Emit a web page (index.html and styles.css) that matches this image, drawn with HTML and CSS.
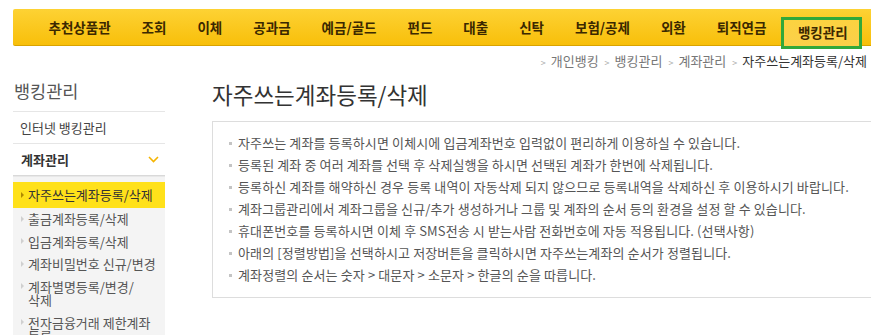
FILE: index.html
```html
<!DOCTYPE html>
<html>
<head>
    <title>자주쓰는계좌등록/삭제</title>
    <link rel="stylesheet" href="styles.css">
</head>
<body>
    <div class="gnb">
        <ul>
            <li>추천상품관</li>
            <li>조회</li>
            <li>이체</li>
            <li>공과금</li>
            <li>예금/골드</li>
            <li>펀드</li>
            <li>대출</li>
            <li>신탁</li>
            <li>보험/공제</li>
            <li>외환</li>
            <li>퇴직연금</li>
            <li class="on">뱅킹관리</li>
        </ul>
    </div>

    <div class="location">
        <span class="arr">&gt;</span><span>개인뱅킹</span><span class="arr">&gt;</span><span>뱅킹관리</span><span class="arr">&gt;</span><span>계좌관리</span><span class="arr">&gt;</span><strong>자주쓰는계좌등록/삭제</strong>
    </div>

    <div class="container">
        <div class="lnb">
            <h2>뱅킹관리</h2>
            <div class="depth1">인터넷 뱅킹관리</div>
            <div class="depth1 open">
                계좌관리
                <svg class="chev" width="11" height="7" viewBox="0 0 11 7"><path d="M1 1 L5.5 5.5 L10 1" fill="none" stroke="#f5b400" stroke-width="1.6"/></svg>
            </div>
            <ul class="depth2">
                <li class="on">자주쓰는계좌등록/삭제</li>
                <li>출금계좌등록/삭제</li>
                <li>입금계좌등록/삭제</li>
                <li>계좌비밀번호 신규/변경</li>
                <li>계좌별명등록/변경/<br>삭제</li>
                <li>전자금융거래 제한계좌<br>등록</li>
            </ul>
        </div>

        <div class="content">
            <h1>자주쓰는계좌등록/삭제</h1>
            <div class="infobox">
                <ul>
                    <li>자주쓰는 계좌를 등록하시면 이체시에 입금계좌번호 입력없이 편리하게 이용하실 수 있습니다.</li>
                    <li>등록된 계좌 중 여러 계좌를 선택 후 삭제실행을 하시면 선택된 계좌가 한번에 삭제됩니다.</li>
                    <li>등록하신 계좌를 해약하신 경우 등록 내역이 자동삭제 되지 않으므로 등록내역을 삭제하신 후 이용하시기 바랍니다.</li>
                    <li>계좌그룹관리에서 계좌그룹을 신규/추가 생성하거나 그룹 및 계좌의 순서 등의 환경을 설정 할 수 있습니다.</li>
                    <li>휴대폰번호를 등록하시면 이체 후 SMS전송 시 받는사람 전화번호에 자동 적용됩니다. (선택사항)</li>
                    <li>아래의 [정렬방법]을 선택하시고 저장버튼을 클릭하시면 자주쓰는계좌의 순서가 정렬됩니다.</li>
                    <li>계좌정렬의 순서는 숫자 &gt; 대문자 &gt; 소문자 &gt; 한글의 순을 따릅니다.</li>
                </ul>
            </div>
        </div>
    </div>
</body>
</html>
```

FILE: styles.css
```css
body {
    margin: 0;
    width: 871px;
    height: 335px;
    overflow: hidden;
    background-color: #FFFFFF;
    font-family: "Noto Sans CJK KR", "Noto Sans", sans-serif;
    font-size: 13px;
    color: #555555;
}
ul {
    margin: 0;
    padding: 0;
    list-style: none;
}

/* top menu */
.gnb {
    margin: 9px -20px 0 13px;
    height: 36px;
    background: linear-gradient(#fdd234, #f8bf0a);
    border-bottom: 1px solid #d9a300;
    border-radius: 2px 0 0 2px;
}
.gnb ul {
    display: flex;
    align-items: flex-start;
    padding-left: 20px;
}
.gnb li {
    padding: 0 15.5px;
    height: 36px;
    line-height: 36px;
    font-size: 13.5px;
    font-weight: 700;
    color: #3b2800;
}
.gnb li.on {
    margin-top: 8px;
    margin-left: -1px;
    padding: 0 11px 0 14px;
    height: 26px;
    line-height: 24px;
    border: 3px solid #32a83a;
    background: linear-gradient(#fcd240, #fbd04a);
}

/* breadcrumb */
.location {
    margin-top: 7px;
    padding-right: 4px;
    height: 16px;
    line-height: 16px;
    text-align: right;
    color: #777777;
}
.location .arr {
    font-size: 9px;
    color: #aaaaaa;
    margin: 0 5px 0 6px;
}
.location strong {
    font-weight: normal;
    color: #333333;
}

/* layout */
.container {
    display: flex;
    align-items: flex-start;
}

/* left menu */
.lnb {
    flex: none;
    width: 152px;
    margin-left: 13px;
}
.lnb h2 {
    margin: 0;
    padding: 9px 0 8px 1px;
    line-height: 25px;
    font-size: 17.5px;
    font-weight: normal;
    color: #555555;
    border-bottom: 1px solid #e6e6e6;
}
.depth1 {
    position: relative;
    height: 31px;
    line-height: 31px;
    padding-left: 7px;
    color: #444444;
    border-bottom: 1px solid #e6e6e6;
}
.depth1.open {
    padding-left: 8px;
    font-weight: 700;
    color: #333333;
    border-bottom-color: #d9d9d9;
}
.depth1 .chev {
    position: absolute;
    right: 6px;
    top: 12px;
}
.depth2 {
    background-color: #f4f4f4;
    padding: 5px 0 10px;
    border-top: 1px solid #e8e8e8;
}
.depth2 li {
    position: relative;
    padding: 4.5px 0 4.5px 15px;
    line-height: 13.5px;
    color: #555555;
}
.depth2 li::before {
    content: "";
    position: absolute;
    left: 8px;
    top: 8px;
    border-left: 3px solid #d0d0d0;
    border-top: 3px solid transparent;
    border-bottom: 3px solid transparent;
}
.depth2 li.on {
    padding-top: 6px;
    padding-bottom: 6px;
    background-color: #ffe11a;
    color: #333333;
}
.depth2 li.on::before {
    top: 10px;
    border-left-color: #b08a00;
}

/* content */
.content {
    flex: none;
    width: 720px;
    margin-left: 47px;
}
.content h1 {
    margin: 10px 0 0;
    line-height: 30px;
    font-size: 22.5px;
    font-weight: normal;
    color: #333333;
}
.infobox {
    margin-top: 12px;
    padding: 10px 16px 11px;
    border: 1px solid #dddddd;
}
.infobox li {
    position: relative;
    padding-left: 9px;
    line-height: 22px;
    letter-spacing: 0.12px;
    color: #555555;
}
.infobox li::before {
    content: "";
    position: absolute;
    left: 0;
    top: 10px;
    width: 3px;
    height: 3px;
    background-color: #c4c4c4;
}
```
